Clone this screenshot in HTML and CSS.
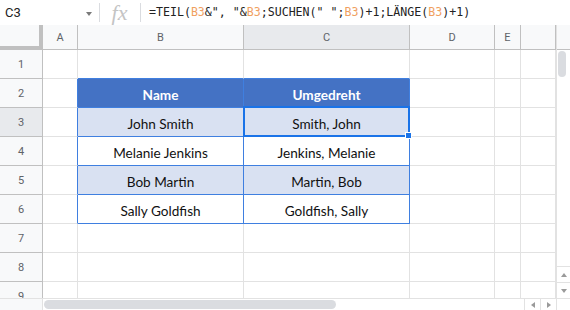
FILE: index.html
```html
<!DOCTYPE html>
<html>
<head>
<meta charset="utf-8">
<link rel="stylesheet" href="styles.css">
</head>
<body>
<div class="fbar">
  <div class="namebox"><span class="ref">C3</span><span class="caret"></span></div>
  <div class="sep"></div>
  <div class="fx">fx</div>
  <div class="sep"></div>
  <div class="formula">=TEIL(<span class="r">B3</span>&amp;", "&amp;<span class="r">B3</span>;SUCHEN(" ";<span class="r">B3</span>)+1;LÄNGE(<span class="r">B3</span>)+1)</div>
</div>
<div class="sheet">
  <div class="corner"></div>
  <div class="ch">A</div>
  <div class="ch">B</div>
  <div class="ch sel">C</div>
  <div class="ch">D</div>
  <div class="ch">E</div>
  <div class="ch"></div>
  <div class="vscroll">
    <div class="vhead"></div>
    <div class="vtrack"><div class="vthumb"></div></div>
    <div class="vbtn"><span class="tri up"></span></div>
    <div class="vbtn"><span class="tri down"></span></div>
  </div>

  <div class="rh">1</div><div class="c"></div><div class="c bt"></div><div class="c bt"></div><div class="c"></div><div class="c"></div><div class="c"></div>

  <div class="rh">2</div><div class="c bl"></div><div class="c t th">Name</div><div class="c t th">Umgedreht</div><div class="c"></div><div class="c"></div><div class="c"></div>

  <div class="rh sel">3</div><div class="c bl"></div><div class="c t band">John Smith</div><div class="c t band active">Smith, John<span class="handle"></span></div><div class="c"></div><div class="c"></div><div class="c"></div>

  <div class="rh">4</div><div class="c bl"></div><div class="c t">Melanie Jenkins</div><div class="c t">Jenkins, Melanie</div><div class="c"></div><div class="c"></div><div class="c"></div>

  <div class="rh">5</div><div class="c bl"></div><div class="c t band">Bob Martin</div><div class="c t band">Martin, Bob</div><div class="c"></div><div class="c"></div><div class="c"></div>

  <div class="rh">6</div><div class="c bl"></div><div class="c t">Sally Goldfish</div><div class="c t">Goldfish, Sally</div><div class="c"></div><div class="c"></div><div class="c"></div>

  <div class="rh">7</div><div class="c"></div><div class="c"></div><div class="c"></div><div class="c"></div><div class="c"></div><div class="c"></div>

  <div class="rh">8</div><div class="c"></div><div class="c"></div><div class="c"></div><div class="c"></div><div class="c"></div><div class="c"></div>

  <div class="rh last">9</div><div class="c last"></div><div class="c last"></div><div class="c last"></div><div class="c last"></div><div class="c last"></div><div class="c last"></div>

  <div class="hscroll">
    <div class="hhead"></div>
    <div class="htrack"><div class="hthumb"></div></div>
    <div class="hbtn"><span class="tri left"></span></div>
    <div class="hbtn"><span class="tri right"></span></div>
    <div class="hcorner"></div>
  </div>
</div>
</body>
</html>
```
FILE: styles.css
```css
* { box-sizing: border-box; }
html, body { margin: 0; padding: 0; }
body {
  width: 570px;
  height: 310px;
  overflow: hidden;
  background: #fff;
  font-family: Roboto, "Liberation Sans", sans-serif;
  color: #000;
}

/* formula bar */
.fbar {
  height: 25px;
  display: flex;
  align-items: center;
  background: #fff;
}
.namebox {
  width: 99px;
  height: 25px;
  display: flex;
  align-items: center;
  justify-content: space-between;
  padding: 0 7px 0 5px;
}
.ref { font-size: 13px; color: #222; }
.caret {
  width: 0; height: 0;
  border-left: 3.5px solid transparent;
  border-right: 3.5px solid transparent;
  border-top: 4px solid #7a7a7a;
  margin-top: 2px;
}
.sep {
  width: 1px;
  height: 19px;
  background: #dadce0;
}
.fx {
  width: 40px;
  text-align: center;
  font-family: "Liberation Serif", serif;
  font-style: italic;
  font-size: 22px;
  color: #c4c4c4;
  line-height: 25px;
  padding-right: 1px;
}
.formula {
  padding-left: 8px;
  font-family: "DejaVu Sans Mono", monospace;
  font-size: 11.6px;
  color: #222;
  white-space: pre;
  padding-bottom: 1px;
}
.formula .r { color: #f0a060; }

/* sheet grid */
.sheet {
  display: grid;
  grid-template-columns: 43px 35px 166px 166px 85px 26px 35px 14px;
  grid-template-rows: 25px repeat(8, 29px) 16px 12px;
}
.corner {
  background: #f8f9fa;
  border-right: 4px solid #c0c0c0;
  border-bottom: 4px solid #c0c0c0;
}
.ch {
  background: #f8f9fa;
  border-right: 1px solid #c0c0c0;
  border-bottom: 1px solid #c0c0c0;
  display: flex;
  align-items: center;
  justify-content: center;
  font-size: 11px;
  color: #5f6368;
}
.ch.sel, .rh.sel { background: #e8eaed; }
.rh {
  background: #f8f9fa;
  border-right: 1px solid #c0c0c0;
  border-bottom: 1px solid #c0c0c0;
  display: flex;
  align-items: center;
  justify-content: center;
  font-size: 11px;
  color: #5f6368;
}
.rh.last { align-items: flex-start; padding-top: 8px; border-bottom: none; }
.c {
  border-right: 1px solid #e2e2e2;
  border-bottom: 1px solid #e2e2e2;
  position: relative;
}
.c.last { border-bottom: none; }
.c.bt { border-bottom-color: #3f7fe0; }
.c.bl { border-right-color: #3f7fe0; }
.c.t {
  border-right-color: #3f7fe0;
  border-bottom-color: #3f7fe0;
  display: flex;
  align-items: flex-end;
  justify-content: center;
  padding-bottom: 3px;
  font-family: Lato, "Open Sans", sans-serif;
  font-size: 13.6px;
  line-height: 17px;
  color: #111;
}
.c.th {
  background: #4472c4;
  color: #fff;
  font-weight: bold;
}
.c.band { background: #d9e1f2; }
.c.active::after {
  content: "";
  position: absolute;
  top: -2px; left: -1px; right: -1px; bottom: -1px;
  border: 2px solid #1a73e8;
  pointer-events: none;
}
.handle {
  position: absolute;
  right: -3px;
  bottom: -3px;
  width: 7px;
  height: 7px;
  background: #1a73e8;
  border: 1px solid #fff;
  z-index: 2;
}

/* vertical scrollbar */
.vscroll {
  grid-column: 8;
  grid-row: 1 / 11;
  display: flex;
  flex-direction: column;
  border-left: 1px solid #e2e2e2;
  background: #fff;
}
.vhead {
  height: 25px;
  background: #f8f9fa;
  border-bottom: 1px solid #c0c0c0;
}
.vtrack { flex: 1; position: relative; }
.vthumb {
  position: absolute;
  left: 1px;
  top: 1px;
  width: 8px;
  height: 26px;
  border-radius: 4px;
  background: #dadce0;
}
.vbtn {
  height: 16px;
  border-top: 1px solid #e2e2e2;
  display: flex;
  align-items: center;
  justify-content: center;
}

/* horizontal scrollbar */
.hscroll {
  grid-column: 1 / 9;
  grid-row: 11;
  display: flex;
  border-top: 1px solid #e2e2e2;
}
.hhead { width: 43px; background: #f8f9fa; border-right: 1px solid #e2e2e2; }
.htrack { flex: 1; position: relative; }
.hthumb {
  position: absolute;
  left: 1px;
  top: 1px;
  width: 292px;
  height: 9px;
  border-radius: 5px;
  background: #dadce0;
}
.hbtn {
  width: 16px;
  border-left: 1px solid #e2e2e2;
  display: flex;
  align-items: center;
  justify-content: center;
}
.hcorner { width: 14px; border-left: 1px solid #e2e2e2; }

.tri { width: 0; height: 0; }
.tri.up { border-left: 3.5px solid transparent; border-right: 3.5px solid transparent; border-bottom: 4px solid #9a9a9a; }
.tri.down { border-left: 3.5px solid transparent; border-right: 3.5px solid transparent; border-top: 4px solid #9a9a9a; }
.tri.left { border-top: 3.5px solid transparent; border-bottom: 3.5px solid transparent; border-right: 4px solid #9a9a9a; }
.tri.right { border-top: 3.5px solid transparent; border-bottom: 3.5px solid transparent; border-left: 4px solid #9a9a9a; }
```
